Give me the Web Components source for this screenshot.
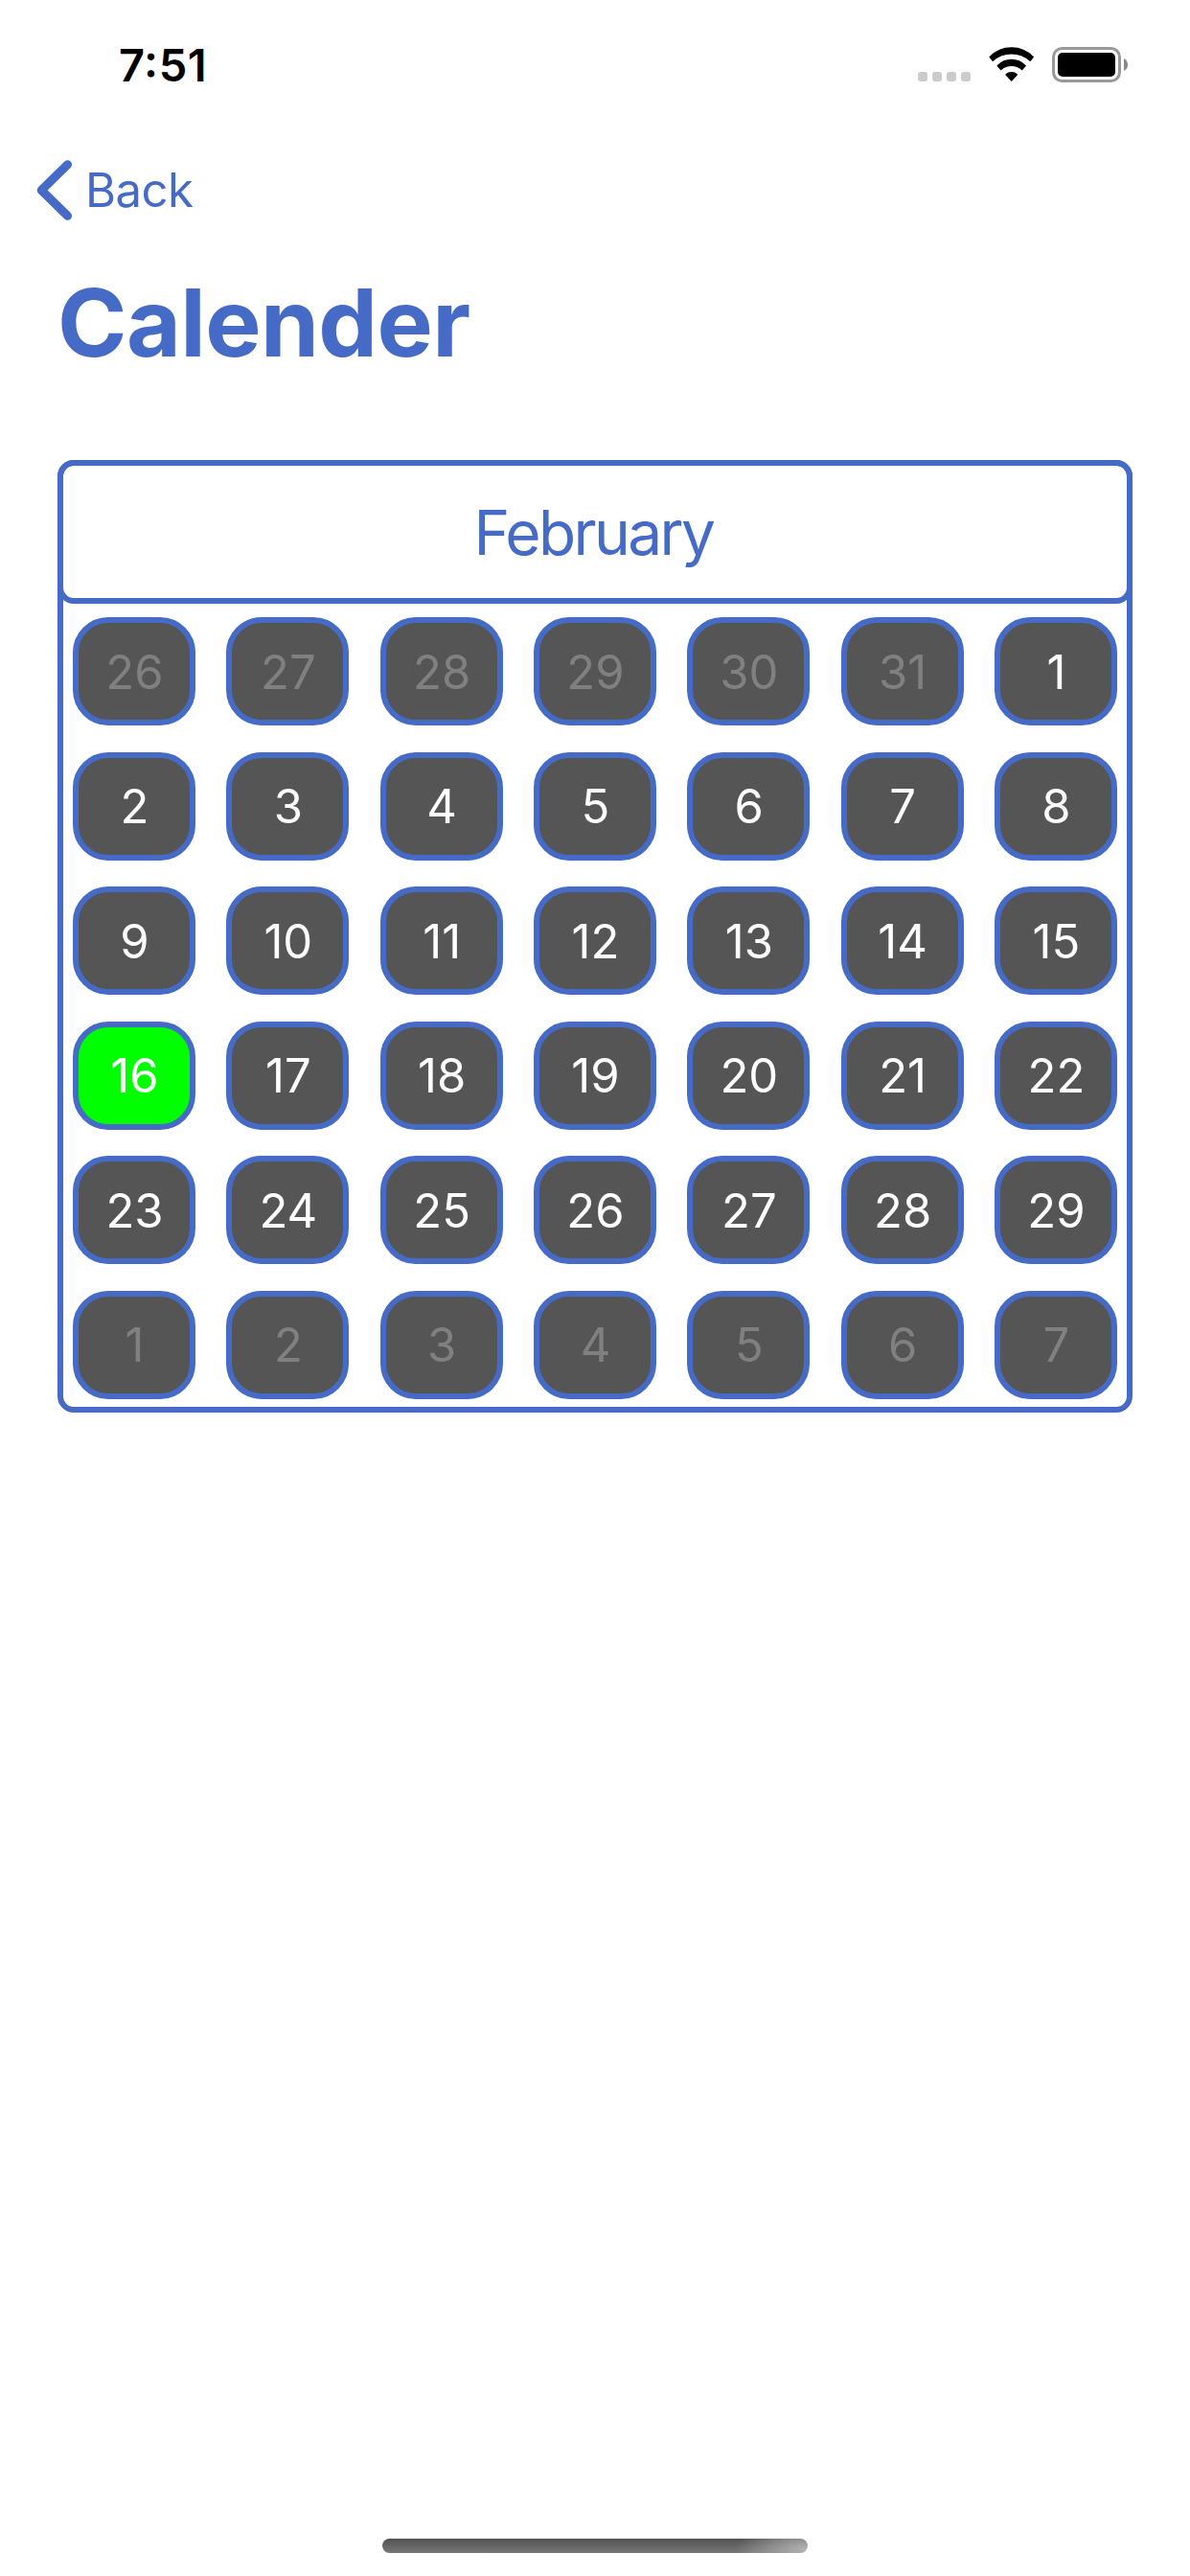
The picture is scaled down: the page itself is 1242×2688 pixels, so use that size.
<!DOCTYPE html>
<html lang="en">
<head>
<meta charset="utf-8">
<title>Calender</title>
<style>
html,body{margin:0;background:#fff}
body{width:1242px;height:2688px;overflow:hidden;font-family:Inter,"Liberation Sans",sans-serif;--accent:#466bc6}
</style>
</head>
<body>
<calendar-screen></calendar-screen>
<script>
const define = (name, html, setup) => customElements.define(name, class extends HTMLElement {
  connectedCallback() {
    if (this.shadowRoot) return;
    const root = this.attachShadow({ mode: 'open' });
    root.innerHTML = html;
    if (setup) setup(this, root);
  }
});

define('status-bar', `
<style>
:host{display:flex;box-sizing:border-box;height:132px;padding:0 65px 0 124px;justify-content:space-between;align-items:flex-start;color:#000}
.time{font-size:47px;font-weight:600;line-height:56px;padding-top:40px;letter-spacing:.6px;font-feature-settings:"case"}
.icons{display:flex;align-items:flex-end;height:37px;padding-top:49px}
.dots{display:flex;gap:5px;padding-bottom:1px}
.dots i{width:10px;height:10px;border-radius:3px;background:#cbcbcb}
.wifi{width:48px;height:37px;margin:0 18.5px 0 19px;display:block;overflow:visible}
.battery{box-sizing:border-box;width:72px;height:37px;border:3px solid #999;border-radius:10.5px;padding:3px;display:flex}
.battery b{flex:1;background:#000;border-radius:5px}
.cap{width:4px;height:13px;margin:0 0 12px 3px;display:block}
</style>
<span class="time">7:51</span>
<div class="icons">
<div class="dots"><i></i><i></i><i></i><i></i></div>
<svg class="wifi" viewBox="0 0 144 111"><path stroke="#000" stroke-width="4" stroke-linejoin="round" d="M3.500 31.500A94 94 0 0 1 138.500 31.500L129.500 43A88 88 0 0 0 12.500 43ZM27.500 59A60 60 0 0 1 114.500 59L104 70.500A50 50 0 0 0 38 70.500ZM54 86.500A25 25 0 0 1 88 86.500L71 105Z"/></svg>
<div class="battery"><b></b></div>
<svg class="cap" viewBox="0 0 4 13"><path fill="#888" d="M0 0Q4 2 4 6.500Q4 11 0 13Z"/></svg>
</div>`);

define('back-link', `
<style>
:host{display:flex;align-items:center;height:132px;padding-left:38px;color:var(--accent)}
svg{width:38px;height:63px;display:block}
span{font-size:49px;line-height:60px;margin-left:13px;padding-top:2px;letter-spacing:-.5px}
</style>
<svg viewBox="0 0 38 63"><path d="M32.500 4.700L5.200 31.500L32.500 58.300" fill="none" stroke="currentColor" stroke-width="9" stroke-linecap="round" stroke-linejoin="round"/></svg>
<span><slot></slot></span>`);

define('large-title', `
<style>
:host{display:block;height:216px;padding-left:60px;color:var(--accent)}
h1{margin:0;font-size:98px;line-height:120px;font-weight:700;padding-top:13px;letter-spacing:-.6px}
</style>
<h1><slot></slot></h1>`);

define('calendar-day', `
<style>
:host{display:flex;box-sizing:border-box;width:128px;height:113px;padding:2px 0 0 1px;align-items:center;justify-content:center;border:6px solid var(--accent);border-radius:37px;background:#555;color:#fff;font-size:49px;line-height:60px}
:host([outside]){color:#808080}
:host([today]){background:#0f0}
</style>
<slot></slot>`);

define('month-calendar', `
<style>
:host{display:block;box-sizing:border-box;height:994px;margin:0 60px;border:6px solid var(--accent);border-radius:17px}
header{display:flex;box-sizing:border-box;height:150px;margin:-6px -6px 14px;padding-right:3px;align-items:center;justify-content:center;border:6px solid var(--accent);border-radius:17px;color:var(--accent);font-size:64px;letter-spacing:-2.6px}
.days{display:grid;grid-template-columns:repeat(7,128px);grid-auto-rows:113px;gap:27.6px 32.33px;padding-left:10px}
</style>
<header><span></span></header>
<div class="days"></div>`, (host, root) => {
  root.querySelector('span').textContent = host.getAttribute('month');
  const grid = root.querySelector('.days');
  const add = (n, attr) => {
    const day = document.createElement('calendar-day');
    day.textContent = n;
    if (attr) day.setAttribute(attr, '');
    grid.append(day);
  };
  for (let n = 26; n <= 31; n++) add(n, 'outside');
  for (let n = 1; n <= 29; n++) add(n, n === 16 ? 'today' : '');
  for (let n = 1; n <= 7; n++) add(n, 'outside');
});

define('home-indicator', `
<style>
:host{display:block;width:444px;height:15px;margin:auto auto 24px;border-radius:8px;background:radial-gradient(ellipse 75px 30px at 100% 80%,#b4b4b4,#b4b4b400),linear-gradient(#525252,#777)}
</style>`);

define('calendar-screen', `
<style>:host{display:flex;flex-direction:column;height:2688px;background:#fff}</style>
<status-bar></status-bar>
<back-link>Back</back-link>
<large-title>Calender</large-title>
<month-calendar month="February"></month-calendar>
<home-indicator></home-indicator>`);
</script>
</body>
</html>
